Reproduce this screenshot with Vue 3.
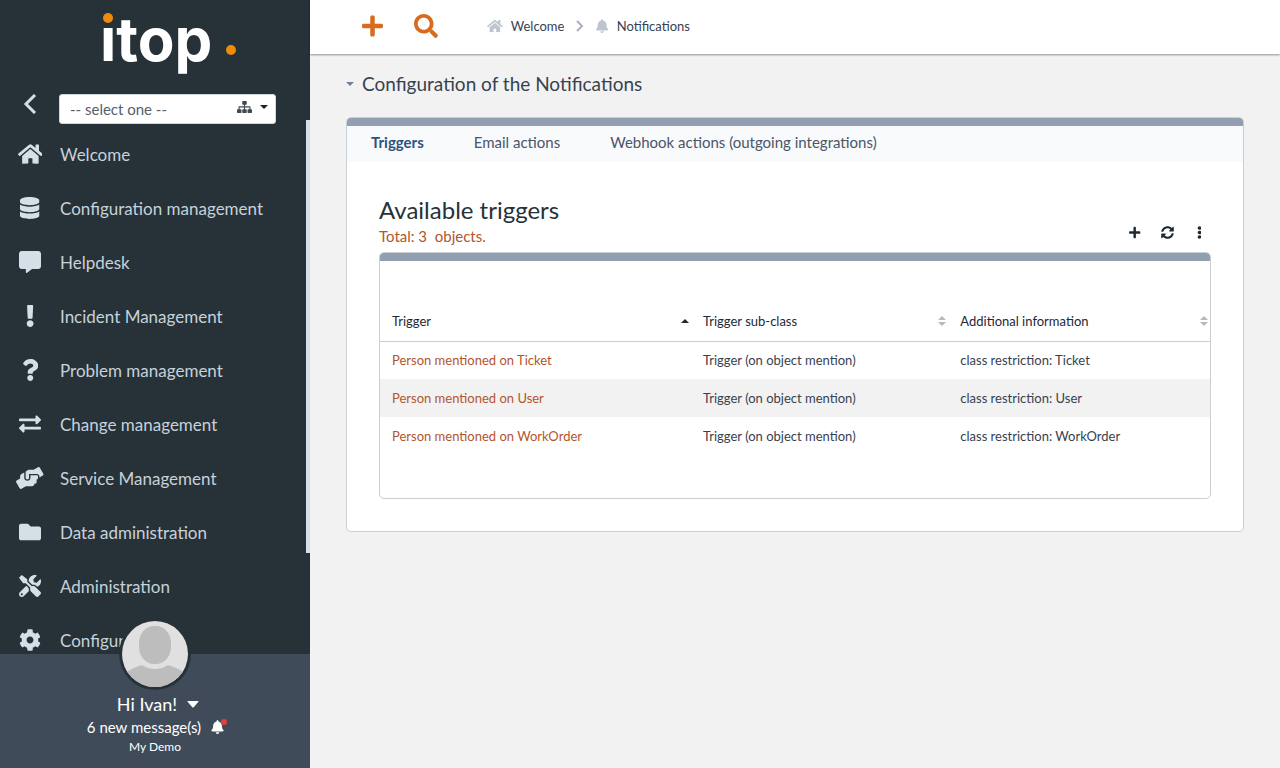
<script setup>
import { ref, h } from 'vue'

const shapes = {
  home: [576, 'M280.37 148.26L96 300.11V464a16 16 0 0 0 16 16l112.06-.29a16 16 0 0 0 15.92-16V368a16 16 0 0 1 16-16h64a16 16 0 0 1 16 16v95.64a16 16 0 0 0 16 16.05L464 480a16 16 0 0 0 16-16V300L295.67 148.26a12.19 12.19 0 0 0-15.3 0zM571.6 251.47L488 182.56V44.05a12 12 0 0 0-12-12h-56a12 12 0 0 0-12 12v72.61L318.47 43a48 48 0 0 0-61 0L4.34 251.47a12 12 0 0 0-1.6 16.9l25.5 31A12 12 0 0 0 45.15 301l235.22-193.74a12.19 12.19 0 0 1 15.3 0L530.9 301a12 12 0 0 0 16.9-1.6l25.5-31a12 12 0 0 0-1.7-16.93z'],
  database: [448, 'M448 73.143v45.714C448 159.143 347.667 192 224 192S0 159.143 0 118.857V73.143C0 32.857 100.333 0 224 0s224 32.857 224 73.143zM448 176v102.857C448 319.143 347.667 352 224 352S0 319.143 0 278.857V176c48.125 33.143 136.208 48.572 224 48.572S399.874 209.143 448 176zm0 160v102.857C448 479.143 347.667 512 224 512S0 479.143 0 438.857V336c48.125 33.143 136.208 48.572 224 48.572S399.874 369.143 448 336z'],
  comment: [512, 'M448 0H64C28.7 0 0 28.7 0 64v288c0 35.3 28.7 64 64 64h96v84c0 9.8 11.2 15.5 19.1 9.7L304 416h144c35.3 0 64-28.7 64-64V64c0-35.3-28.7-64-64-64z'],
  exclamation: [192, 'M176 432c0 44.112-35.888 80-80 80s-80-35.888-80-80 35.888-80 80-80 80 35.888 80 80zM25.26 25.199l13.6 272C39.499 309.972 50.041 320 62.83 320h66.34c12.789 0 23.331-10.028 23.97-22.801l13.6-272C167.425 11.49 156.496 0 142.77 0H49.23C35.504 0 24.575 11.49 25.26 25.199z'],
  question: [384, 'M202.021 0C122.202 0 70.503 32.703 29.914 91.026c-7.363 10.58-5.093 25.086 5.178 32.874l43.138 32.709c10.373 7.865 25.132 6.026 33.253-4.148 25.049-31.381 43.63-49.449 82.757-49.449 30.764 0 68.816 19.799 68.816 49.631 0 22.552-18.617 34.134-48.993 51.164-35.423 19.86-82.299 44.576-82.299 106.405V320c0 13.255 10.745 24 24 24h72.471c13.255 0 24-10.745 24-24v-5.773c0-42.86 125.268-44.645 125.268-160.627C377.504 66.256 286.902 0 202.021 0zM192 373.459c-38.196 0-69.271 31.075-69.271 69.271 0 38.195 31.075 69.27 69.271 69.27s69.271-31.075 69.271-69.271-31.075-69.27-69.271-69.27z'],
  exchange: [512, 'M0 168v-16c0-13.255 10.745-24 24-24h360V80c0-21.367 25.899-32.042 40.971-16.971l80 80c9.372 9.373 9.372 24.569 0 33.941l-80 80C409.956 271.982 384 261.456 384 240v-48H24c-13.255 0-24-10.745-24-24zm488 152H128v-48c0-21.314-25.862-32.08-40.971-16.971l-80 80c-9.372 9.373-9.372 24.569 0 33.941l80 80C102.057 463.997 128 453.437 128 432v-48h360c13.255 0 24-10.745 24-24v-16c0-13.255-10.745-24-24-24z'],
  hands: [640, 'M488 192H336v56c0 39.7-32.3 72-72 72s-72-32.3-72-72V126.4l-64.9 39C107.8 176.9 96 197.8 96 220.2v47.3l-80 46.2C.7 322.5-4.6 342.1 4.3 357.4l80 138.6c8.8 15.3 28.4 20.5 43.7 11.7L231.4 448H368c35.3 0 64-28.7 64-64h16c17.7 0 32-14.3 32-32v-64h8c13.3 0 24-10.7 24-24v-48c0-13.3-10.7-24-24-24zm147.7-37.4L555.7 16C546.9.7 527.3-4.5 512 4.3L408.6 64H306.4c-12 0-23.7 3.4-33.9 9.7L239 94.6c-9.4 5.8-15 16.1-15 27.1V248c0 22.1 17.9 40 40 40s40-17.9 40-40v-88h184c30.9 0 56 25.1 56 56v28.5l80-46.2c15.3-8.9 20.5-28.4 11.7-43.7z'],
  folder: [512, 'M464 128H272l-64-64H48C21.49 64 0 85.49 0 112v288c0 26.51 21.49 48 48 48h416c26.51 0 48-21.49 48-48V176c0-26.51-21.49-48-48-48z'],
  tools: [512, 'M501.1 395.7L384 278.6c-23.1-23.1-57.6-27.6-85.4-13.9L192 158.1V96L64 0 0 64l96 128h62.1l106.6 106.6c-13.6 27.8-9.2 62.3 13.9 85.4l117.1 117.1c14.6 14.6 38.2 14.6 52.7 0l52.7-52.7c14.5-14.6 14.5-38.2 0-52.7zM331.7 225c28.3 0 54.9 11 74.9 31l19.4 19.4c15.8-6.9 30.8-16.5 43.8-29.5 37.1-37.1 49.7-89.3 37.9-136.7-2.2-9-13.5-12.1-20.1-5.5l-74.4 74.4-67.9-11.3L334 98.9l74.4-74.4c6.6-6.6 3.4-17.9-5.7-20.2-47.4-11.7-99.6.9-136.6 37.9-28.5 28.5-41.9 66.1-41.2 103.6l82.1 82.1c8.1-1.9 16.5-2.9 24.7-2.9zm-103.9 82l-56.7-56.7L18.7 402.8c-25 25-25 65.5 0 90.5s65.5 25 90.5 0l123.6-123.6c-7.6-19.9-9.9-41.6-5-62.7zM64 472c-13.2 0-24-10.8-24-24 0-13.3 10.7-24 24-24s24 10.7 24 24c0 13.2-10.7 24-24 24z'],
  cog: [512, 'M487.4 315.7l-42.6-24.6c4.3-23.2 4.3-47 0-70.2l42.6-24.6c4.9-2.8 7.1-8.6 5.5-14-11.1-35.6-30-67.8-54.7-94.6-3.8-4.1-10-5.1-14.8-2.3L380.8 110c-17.9-15.4-38.5-27.3-60.8-35.1V25.8c0-5.6-3.9-10.5-9.4-11.7-36.7-8.2-74.3-7.8-109.2 0-5.5 1.2-9.4 6.1-9.4 11.7V75c-22.2 7.9-42.8 19.8-60.8 35.1L88.7 85.5c-4.9-2.8-11-1.9-14.8 2.3-24.7 26.7-43.6 58.9-54.7 94.6-1.7 5.4.6 11.2 5.5 14L67.3 221c-4.3 23.2-4.3 47 0 70.2l-42.6 24.6c-4.9 2.8-7.1 8.6-5.5 14 11.1 35.6 30 67.8 54.7 94.6 3.8 4.1 10 5.1 14.8 2.3l42.6-24.6c17.9 15.4 38.5 27.3 60.8 35.1v49.2c0 5.6 3.9 10.5 9.4 11.7 36.7 8.2 74.3 7.8 109.2 0 5.5-1.2 9.4-6.1 9.4-11.7v-49.2c22.2-7.9 42.8-19.8 60.8-35.1l42.6 24.6c4.9 2.8 11 1.9 14.8-2.3 24.7-26.7 43.6-58.9 54.7-94.6 1.5-5.5-.7-11.3-5.6-14.1zM256 336c-44.1 0-80-35.9-80-80s35.9-80 80-80 80 35.9 80 80-35.9 80-80 80z'],
  bell: [448, 'M224 512c35.32 0 63.97-28.65 63.97-64H160.03c0 35.35 28.65 64 63.97 64zm215.39-149.71c-19.32-20.76-55.47-51.99-55.47-154.29 0-77.7-54.48-139.9-127.94-155.16V32c0-17.67-14.32-32-31.98-32s-31.98 14.33-31.98 32v20.84C118.56 68.1 64.08 130.3 64.08 208c0 102.3-36.15 133.53-55.47 154.29-6 6.45-8.66 14.16-8.61 21.71.11 16.4 12.98 32 32.1 32h383.8c19.12 0 32-15.6 32.1-32 .05-7.55-2.61-15.27-8.61-21.71z'],
  search: [512, 'M505 442.7L405.3 343c-4.5-4.5-10.6-7-17-7H372c27.6-35.3 44-79.7 44-128C416 93.1 322.9 0 208 0S0 93.1 0 208s93.1 208 208 208c48.3 0 92.7-16.4 128-44v16.3c0 6.4 2.5 12.5 7 17l99.7 99.7c9.4 9.4 24.6 9.4 33.9 0l28.3-28.3c9.4-9.4 9.4-24.6.1-34zM208 336c-70.7 0-128-57.2-128-128 0-70.7 57.2-128 128-128 70.7 0 128 57.2 128 128 0 70.7-57.2 128-128 128z'],
  plus: [448, 'M416 208H272V64c0-17.67-14.33-32-32-32h-32c-17.67 0-32 14.33-32 32v144H32c-17.67 0-32 14.33-32 32v32c0 17.67 14.33 32 32 32h144v144c0 17.67 14.33 32 32 32h32c17.67 0 32-14.33 32-32V304h144c17.67 0 32-14.33 32-32v-32c0-17.67-14.33-32-32-32z'],
  sync: [512, 'M370.72 133.28C339.458 104.008 298.888 87.962 255.848 88c-77.458.068-144.328 53.178-162.791 126.85-1.344 5.363-6.122 9.15-11.651 9.15H24.103c-7.498 0-13.194-6.807-11.807-14.176C33.933 94.924 134.813 8 256 8c66.448 0 126.791 26.136 171.315 68.685L463.03 40.97C478.149 25.851 504 36.559 504 57.941V192c0 13.255-10.745 24-24 24H345.941c-21.382 0-32.09-25.851-16.971-40.971l41.75-41.749zM32 296h134.059c21.382 0 32.09 25.851 16.971 40.971l-41.75 41.75c31.262 29.273 71.835 45.319 114.876 45.28 77.418-.07 144.315-53.144 162.787-126.849 1.344-5.363 6.122-9.15 11.651-9.15h57.304c7.498 0 13.194 6.807 11.807 14.176C478.067 417.076 377.187 504 256 504c-66.448 0-126.791-26.136-171.315-68.685L48.97 471.03C33.851 486.149 8 475.441 8 454.059V320c0-13.255 10.745-24 24-24z'],
  dots: [192, 'M96 184a72 72 0 1 1 0 144 72 72 0 0 1 0-144zM96 8a72 72 0 1 1 0 144A72 72 0 0 1 96 8zm0 352a72 72 0 1 1 0 144 72 72 0 0 1 0-144z'],
  sitemap: [640, 'M256 0h128a32 32 0 0 1 32 32v96a32 32 0 0 1-32 32h-40v64h200a32 32 0 0 1 32 32v96h32a32 32 0 0 1 32 32v96a32 32 0 0 1-32 32H480a32 32 0 0 1-32-32v-96a32 32 0 0 1 32-32h48v-80H344v80h40a32 32 0 0 1 32 32v96a32 32 0 0 1-32 32H256a32 32 0 0 1-32-32v-96a32 32 0 0 1 32-32h40v-80H112v80h48a32 32 0 0 1 32 32v96a32 32 0 0 1-32 32H32a32 32 0 0 1-32-32v-96a32 32 0 0 1 32-32h32v-96a32 32 0 0 1 32-32h200v-64h-40a32 32 0 0 1-32-32V32a32 32 0 0 1 32-32z']
}

const Icon = (props) => {
  const [width, d] = shapes[props.name]
  return h('svg', { viewBox: `0 0 ${width} 512`, fill: 'currentColor', 'aria-hidden': 'true' }, [h('path', { d })])
}
Icon.props = ['name']

const menu = [
  { icon: 'home', label: 'Welcome' },
  { icon: 'database', label: 'Configuration management' },
  { icon: 'comment', label: 'Helpdesk' },
  { icon: 'exclamation', label: 'Incident Management' },
  { icon: 'question', label: 'Problem management' },
  { icon: 'exchange', label: 'Change management' },
  { icon: 'hands', label: 'Service Management' },
  { icon: 'folder', label: 'Data administration' },
  { icon: 'tools', label: 'Administration' },
  { icon: 'cog', label: 'Configuration' }
]

const tabs = ['Triggers', 'Email actions', 'Webhook actions (outgoing integrations)']
const activeTab = ref(tabs[0])

const columns = ['Trigger', 'Trigger sub-class', 'Additional information']
const rows = [
  ['Person mentioned on Ticket', 'Trigger (on object mention)', 'class restriction: Ticket'],
  ['Person mentioned on User', 'Trigger (on object mention)', 'class restriction: User'],
  ['Person mentioned on WorkOrder', 'Trigger (on object mention)', 'class restriction: WorkOrder']
]
</script>

<template>
  <div class="app">
    <aside class="sidebar">
      <a class="logo" href="#" aria-label="itop">
        <svg viewBox="0 0 140 80" width="140" height="80">
          <text class="wordmark" x="1" y="53">itop</text>
          <circle cx="9" cy="10" r="9" class="logo-gap" />
          <circle cx="9" cy="10" r="5" class="logo-dot" />
          <circle cx="132" cy="42" r="5" class="logo-dot" />
        </svg>
      </a>
      <div class="silo">
        <button class="collapse" type="button" aria-label="Collapse menu">
          <svg viewBox="0 0 14 20"><path d="M12 1L3 10l9 9" fill="none" stroke="currentColor" stroke-width="3" /></svg>
        </button>
        <div class="select-box">
          <select aria-label="Organization">
            <option>-- select one --</option>
          </select>
          <span class="select-icons">
            <Icon name="sitemap" class="i-sitemap" />
            <svg class="i-caret" viewBox="0 0 8 4"><path d="M0 0h8L4 4z" fill="currentColor" /></svg>
          </span>
        </div>
      </div>
      <nav class="menu">
        <a v-for="item in menu" :key="item.label" class="menu-item" href="#">
          <span class="menu-icon"><Icon :name="item.icon" /></span>
          <span>{{ item.label }}</span>
        </a>
        <span class="scroll-thumb"></span>
      </nav>
      <footer class="user">
        <svg class="avatar" viewBox="0 0 72 72" aria-hidden="true">
          <defs><clipPath id="face"><circle cx="36" cy="36" r="33" /></clipPath></defs>
          <circle cx="36" cy="36" r="36" fill="#263238" />
          <g clip-path="url(#face)">
            <rect width="72" height="72" fill="#e0e0e0" />
            <path d="M2 58Q12 50 23 47Q29 51 36 51Q43 51 49 47Q60 50 70 58V72H2z" fill="#bdbdbd" />
            <rect x="20" y="8" width="32" height="38" rx="15" ry="17" fill="#bdbdbd" />
          </g>
        </svg>
        <button class="greeting" type="button">
          <span>Hi Ivan!</span>
          <svg viewBox="0 0 12 7"><path d="M1 0h10q1 0 .4.8L6.7 6.2q-.7.7-1.4 0L.6.8Q0 0 1 0z" fill="currentColor" /></svg>
        </button>
        <a class="messages" href="#">
          <span>6 new message(s)</span>
          <span class="bell"><Icon name="bell" /><span class="badge"></span></span>
        </a>
        <span class="org">My Demo</span>
      </footer>
    </aside>

    <div class="page">
      <header class="topbar">
        <button class="top-action" type="button" aria-label="Create"><Icon name="plus" /></button>
        <button class="top-action" type="button" aria-label="Search"><Icon name="search" /></button>
        <nav class="breadcrumbs">
          <a href="#"><Icon name="home" />Welcome</a>
          <svg class="chevron" viewBox="0 0 8 12"><path d="M1 1l5 5-5 5" fill="none" stroke="currentColor" stroke-width="2" /></svg>
          <a href="#"><Icon name="bell" />Notifications</a>
        </nav>
      </header>

      <main class="content">
        <h1>
          <button type="button" aria-label="Toggle section">
            <svg viewBox="0 0 8 4"><path d="M0 0h8L4 4z" fill="currentColor" /></svg>
          </button>
          Configuration of the Notifications
        </h1>
        <section class="panel">
          <div class="tabs" role="tablist">
            <button
              v-for="tab in tabs"
              :key="tab"
              type="button"
              role="tab"
              :aria-selected="tab === activeTab"
              :class="{ active: tab === activeTab }"
              @click="activeTab = tab"
            >{{ tab }}</button>
          </div>
          <div class="panel-body">
            <div class="list-head">
              <div>
                <h2>Available triggers</h2>
                <p>Total:&nbsp;3&nbsp; objects.</p>
              </div>
              <div class="tools">
                <button type="button" aria-label="New"><Icon name="plus" /></button>
                <button type="button" aria-label="Refresh"><Icon name="sync" /></button>
                <button type="button" aria-label="More"><Icon name="dots" /></button>
              </div>
            </div>
            <div class="list">
              <table>
                <colgroup><col class="c1" /><col class="c2" /><col class="c3" /></colgroup>
                <thead>
                  <tr>
                    <th v-for="(col, i) in columns" :key="col" scope="col">
                      <div class="th">
                        {{ col }}
                        <svg v-if="i === 0" class="sort asc" viewBox="0 0 8 10"><path d="M0 7L4 3l4 4z" fill="currentColor" /></svg>
                        <svg v-else class="sort" viewBox="0 0 8 10"><path d="M0 4L4 0l4 4zM0 6h8L4 10z" fill="currentColor" /></svg>
                      </div>
                    </th>
                  </tr>
                </thead>
                <tbody>
                  <tr v-for="row in rows" :key="row[0]">
                    <td><a href="#">{{ row[0] }}</a></td>
                    <td>{{ row[1] }}</td>
                    <td>{{ row[2] }}</td>
                  </tr>
                </tbody>
              </table>
            </div>
          </div>
        </section>
      </main>
    </div>
  </div>
</template>

<style>
body {
  margin: 0;
  background: #f2f2f2;
}
</style>

<style scoped>
.app {
  display: flex;
  min-height: 100vh;
  font-family: Lato, "Open Sans", sans-serif;
  font-size: 13px;
  color: #37424f;
}
a {
  color: inherit;
  text-decoration: none;
}
button {
  display: flex;
  align-items: center;
  margin: 0;
  padding: 0;
  border: 0;
  background: none;
  font: inherit;
  color: inherit;
  cursor: pointer;
}
svg {
  display: block;
  flex: none;
}

.sidebar {
  display: flex;
  flex: none;
  flex-direction: column;
  width: 310px;
  height: 100vh;
  background: #263238;
  color: #d5dfe8;
}
.logo {
  display: flex;
  justify-content: center;
  padding: 8px 0 6px 28px;
}
.logo svg {
  overflow: visible;
}
.wordmark {
  fill: #fff;
  font-family: Inter, sans-serif;
  font-size: 60px;
  font-weight: 700;
}
.logo-gap {
  fill: #263238;
}
.logo-dot {
  fill: #ef8b09;
}
.silo {
  display: flex;
  align-items: center;
  gap: 20px;
  padding: 0 34px 0 20px;
}
.collapse {
  justify-content: center;
  width: 19px;
  height: 30px;
}
.collapse svg {
  width: 14px;
  height: 20px;
  margin-bottom: 10px;
}
.select-box {
  position: relative;
  flex: 1;
}
.select-box select {
  display: block;
  width: 100%;
  height: 30px;
  padding: 0 52px 0 10px;
  border: 1px solid #cfd8dc;
  border-radius: 3px;
  appearance: none;
  background: #fff;
  color: #56606c;
  font: inherit;
  font-size: 15px;
}
.select-icons {
  position: absolute;
  top: 0;
  right: 8px;
  display: flex;
  align-items: center;
  gap: 8px;
  height: 26px;
  color: #414852;
  pointer-events: none;
}
.i-sitemap {
  width: 15px;
  height: 12px;
}
.i-caret {
  width: 8px;
  height: 4px;
  color: #222;
}
.menu {
  position: relative;
  flex: 1;
  min-height: 0;
  margin-top: -4px;
  padding-top: 7px;
  overflow: hidden;
}
.menu-item {
  display: flex;
  align-items: center;
  height: 54px;
  color: #c6d1da;
  font-size: 17px;
  white-space: nowrap;
}
.menu-icon {
  display: flex;
  justify-content: center;
  width: 60px;
  color: #d5dfe8;
}
.menu-icon svg {
  height: 22px;
}
.scroll-thumb {
  position: absolute;
  top: 0;
  right: 0;
  width: 4px;
  height: 81%;
  background: #d7e0e9;
}
.user {
  position: relative;
  display: flex;
  flex: none;
  flex-direction: column;
  align-items: center;
  padding: 38px 0 12px;
  background: #404b59;
  color: #fff;
}
.avatar {
  position: absolute;
  top: -36px;
  left: 119px;
  width: 72px;
  height: 72px;
}
.greeting {
  gap: 10px;
  margin-left: 6px;
  font-size: 18px;
  line-height: 24px;
}
.greeting svg {
  width: 12px;
  height: 7px;
}
.messages {
  display: flex;
  align-items: center;
  gap: 10px;
  margin-left: 4px;
  font-size: 15px;
  line-height: 22px;
}
.bell {
  position: relative;
  padding-right: 3px;
}
.bell svg {
  width: 13px;
  height: 14px;
}
.badge {
  position: absolute;
  top: -1px;
  right: 0;
  width: 6px;
  height: 6px;
  border-radius: 3px;
  background: #e53e3e;
}
.org {
  font-size: 12px;
  line-height: 18px;
}

.page {
  flex: 1;
  min-width: 0;
}
.topbar {
  display: flex;
  align-items: center;
  height: 54px;
  box-sizing: border-box;
  padding: 0 36px 2px 50px;
  background: #fff;
  box-shadow: 0 1px 2px #00000066;
}
.top-action {
  justify-content: center;
  width: 24px;
  height: 32px;
  margin-right: 30px;
  color: #d96b1e;
}
.top-action svg {
  height: 24px;
}
.breadcrumbs,
.breadcrumbs a {
  display: flex;
  align-items: center;
}
.breadcrumbs {
  gap: 12px;
  margin-left: 19px;
}
.breadcrumbs a {
  gap: 8px;
}
.breadcrumbs a svg {
  height: 14px;
  color: #bfc5ce;
}
.breadcrumbs .chevron {
  width: 8px;
  height: 12px;
  color: #a9b1bc;
}
.content {
  padding: 18px 36px;
}
h1 {
  display: flex;
  align-items: center;
  gap: 8px;
  margin: 0 0 22px;
  font-size: 19px;
  font-weight: 400;
  line-height: 23px;
}
h1 svg {
  width: 8px;
  height: 4px;
  color: #718096;
}
.panel,
.list {
  border: 1px solid #c8d0d6;
  border-radius: 5px;
  background: #fff;
  overflow: hidden;
}
.panel::before,
.list::before {
  content: "";
  display: block;
  height: 8px;
  background: #929fb1;
}
.tabs {
  display: flex;
  gap: 50px;
  box-sizing: border-box;
  height: 36px;
  padding: 0 24px 4px;
  background: #f8fafc;
  color: #4a5568;
  font-size: 15px;
}
.tabs .active {
  color: #2c5282;
  font-weight: 700;
}
.panel-body {
  padding: 32px;
}
.list-head {
  display: flex;
  align-items: flex-end;
  justify-content: space-between;
  margin-bottom: 5px;
}
h2 {
  margin: 0;
  color: #263238;
  font-size: 24px;
  font-weight: 400;
  line-height: 32px;
}
p {
  margin: 0;
  color: #b4552d;
  font-size: 15px;
  line-height: 21px;
}
.tools {
  display: flex;
  gap: 8px;
  padding-bottom: 3px;
}
.tools button {
  justify-content: center;
  width: 24px;
  height: 24px;
  color: #1f2933;
}
.tools svg {
  height: 13px;
}
.list {
  padding-bottom: 43px;
}
table {
  width: 100%;
  margin-top: 40px;
  border-collapse: collapse;
  table-layout: fixed;
}
.c1 {
  width: 311px;
}
.c2 {
  width: 31%;
}
th,
td {
  box-sizing: border-box;
  height: 38px;
  padding: 0 2px 0 12px;
  text-align: left;
}
thead tr {
  border-bottom: 1px solid #c8d0d6;
}
th {
  height: 40px;
  color: #1f2933;
  font-weight: 400;
}
.th {
  display: flex;
  align-items: center;
  justify-content: space-between;
}
.sort {
  width: 8px;
  height: 10px;
  color: #b9b9b9;
}
.asc {
  color: #1f2933;
}
tbody tr:nth-child(even) {
  background: #f2f2f2;
}
td a {
  color: #b4552d;
}
</style>
